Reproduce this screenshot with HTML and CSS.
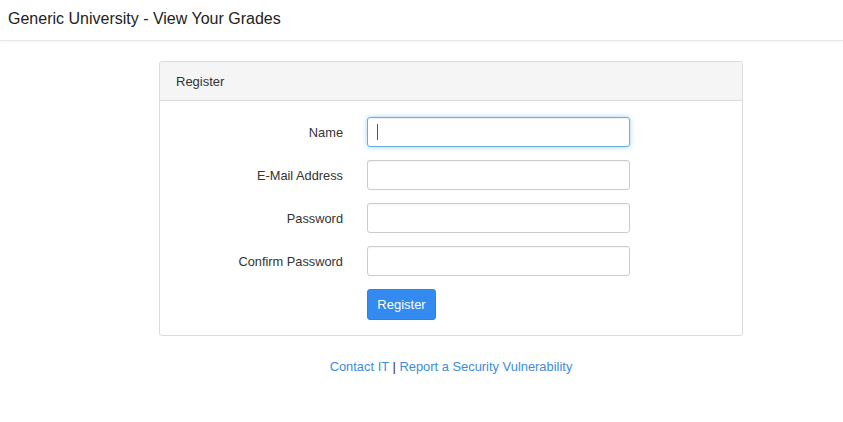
FILE: index.html
```html
<!DOCTYPE html>
<html lang="en">
<head>
<meta charset="utf-8">
<title>Register</title>
<link rel="stylesheet" href="styles.css">
</head>
<body>
<nav class="navbar">
  <a class="brand" href="#">Generic University - View Your Grades</a>
</nav>
<main class="container">
  <section class="panel">
    <div class="panel-heading">Register</div>
    <form class="panel-body">
      <label class="label" for="name">Name</label>
      <div class="field focused"><input id="name" class="input" type="text"></div>
      <label class="label" for="email">E-Mail Address</label>
      <div class="field"><input id="email" class="input" type="email"></div>
      <label class="label" for="password">Password</label>
      <div class="field"><input id="password" class="input" type="password"></div>
      <label class="label" for="confirm">Confirm Password</label>
      <div class="field"><input id="confirm" class="input" type="password"></div>
      <span></span>
      <div class="field"><button type="button" class="btn">Register</button></div>
    </form>
  </section>
  <footer class="footer">
    <a href="#">Contact IT</a> <span class="sep">|</span> <a href="#">Report a Security Vulnerability</a>
  </footer>
</main>
</body>
</html>
```
FILE: styles.css
```css
* { box-sizing: border-box; }
html, body { margin: 0; padding: 0; }
body {
  font-family: "Liberation Sans", Arial, sans-serif;
  font-size: 13px;
  color: #333;
  background: #fff;
}
.navbar {
  height: 41px;
  border-bottom: 1px solid #e8e8e8;
  box-shadow: 0 1px 3px rgba(0,0,0,0.05);
  display: flex;
  align-items: center;
  padding: 0 8px;
}
.brand {
  font-size: 16px;
  color: #222;
  text-decoration: none;
  margin-top: -2px;
}
.container {
  width: 584px;
  margin-left: 159px;
  padding-top: 20px;
}
.panel {
  border: 1px solid #dcdcdc;
  border-radius: 3px;
  background: #fff;
}
.panel-heading {
  height: 39px;
  padding: 0 16px;
  display: flex;
  align-items: center;
  background: #f5f5f5;
  border-bottom: 1px solid #dcdcdc;
  border-radius: 3px 3px 0 0;
  color: #333;
}
.panel-body {
  display: grid;
  grid-template-columns: 167px 263px;
  column-gap: 24px;
  row-gap: 13px;
  padding: 16px 16px 16px 16px;
  margin: 0;
}
.label {
  text-align: right;
  align-self: center;
  color: #333;
  font-size: 12.8px;
}
.field { position: relative; height: 30px; }
.input {
  display: block;
  width: 263px;
  height: 30px;
  border: 1px solid #ccc;
  border-radius: 3px;
  background: #fff;
  font: inherit;
  padding: 0 10px;
  outline: none;
  box-shadow: inset 0 1px 1px rgba(0,0,0,0.04);
}
.focused .input {
  border-color: #66afe9;
  box-shadow: inset 0 1px 1px rgba(0,0,0,0.06), 0 0 5px rgba(102,175,233,0.6);
}
.focused::after {
  content: "";
  position: absolute;
  left: 10px;
  top: 7px;
  width: 1px;
  height: 16px;
  background: #555;
}
.btn {
  height: 31px;
  width: 69px;
  border: 1px solid #2b83e8;
  border-radius: 3px;
  background: #338af0;
  color: #fff;
  font: inherit;
  padding: 0;
}
.footer {
  text-align: center;
  margin-top: 23px;
  font-size: 12.9px;
  color: #333;
}
.footer a { color: #3b8ce3; text-decoration: none; }
.sep { color: #333; }
```
